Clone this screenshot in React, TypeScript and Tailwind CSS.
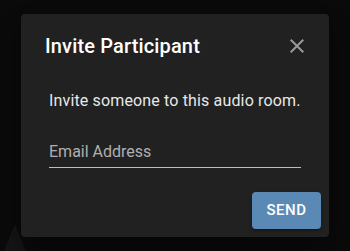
import { useState } from "react";

export default function App() {
  const [email, setEmail] = useState("");

  return (
    <div
      className="relative w-[350px] h-[251px] overflow-hidden bg-[#0a0a0a] pl-[21px] pt-[14px]"
      style={{ fontFamily: "Roboto, 'Liberation Sans', sans-serif" }}
    >
      {/* faint shape behind the backdrop */}
      <svg className="absolute left-0 top-0" width="350" height="251" viewBox="0 0 350 251">
        <polygon points="15,224 4,251 26,251" fill="#141414" />
      </svg>

      {/* dialog */}
      <div className="relative w-[308px] h-[223px] rounded bg-[#212121] shadow-[0_11px_15px_-7px_rgba(0,0,0,0.2),0_24px_38px_3px_rgba(0,0,0,0.14)] flex flex-col">
        {/* title */}
        <div className="flex items-center justify-between pt-4 pl-6 pr-[20px]">
          <h2 className="text-[20px] leading-8 font-medium text-white tracking-[0.15px]">
            Invite Participant
          </h2>
          <button className="w-6 h-6 flex items-center justify-center text-[#999]">
            <svg width="24" height="24" viewBox="0 0 24 24" fill="currentColor">
              <path d="M19 6.41L17.59 5 12 10.59 6.41 5 5 6.41 10.59 12 5 17.59 6.41 19 12 13.41 17.59 19 19 17.59 13.41 12z" />
            </svg>
          </button>
        </div>

        {/* content */}
        <div className="px-7">
          <p className="mt-[27px] text-[16px] leading-6 text-[#e8e8e8] tracking-[0.15px]">
            Invite someone to this audio room.
          </p>
          <div className="mt-[27px] pb-[3px] border-b border-[#bdbdbd]">
            <input
              value={email}
              onChange={(e) => setEmail(e.target.value)}
              placeholder="Email Address"
              className="w-full bg-transparent outline-none text-[16px] leading-6 h-6 text-white placeholder:text-[#b0b0b0]"
            />
          </div>
        </div>

        {/* actions */}
        <div className="flex justify-end pr-2 mt-6">
          <button className="w-[69px] h-[37px] rounded bg-[#5b89b6] text-white text-[15px] font-medium tracking-[0.46px] uppercase shadow-[0_3px_1px_-2px_rgba(0,0,0,0.2),0_2px_2px_0_rgba(0,0,0,0.14),0_1px_5px_0_rgba(0,0,0,0.12)]">
            Send
          </button>
        </div>
      </div>
    </div>
  );
}
